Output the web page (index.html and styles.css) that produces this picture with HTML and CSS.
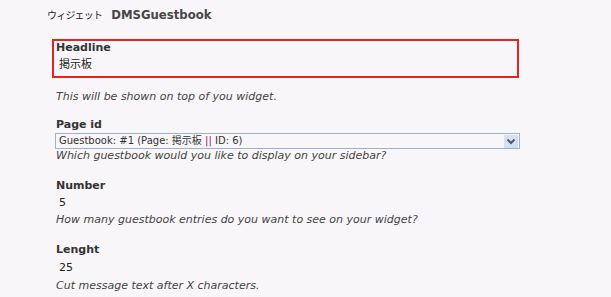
FILE: index.html
```html
<!DOCTYPE html>
<html>
<head>
<meta charset="utf-8">
<link rel="stylesheet" href="styles.css">
</head>
<body>
<div class="page">
  <h2 class="title"><span class="jp">ウィジェット</span><b>DMSGuestbook</b></h2>
  <div class="field highlight">
    <div class="label">Headline</div>
    <div class="value">掲示板</div>
  </div>
  <div class="desc first">This will be shown on top of you widget.</div>

  <div class="label l2">Page id</div>
  <div class="select">
    <span>Guestbook: #1 (Page: 掲示板 <span class="sep">||</span> ID: 6)</span>
    <span class="arrow"><svg width="14" height="13" viewBox="0 0 14 13"><path d="M1 12 H13 V1" fill="none" stroke="#c8d8ea" stroke-width="1"/><path d="M3.5 4.5 L7 8 L10.5 4.5" fill="none" stroke="#4a5a7a" stroke-width="2"/></svg></span>
  </div>
  <div class="desc">Which guestbook would you like to display on your sidebar?</div>

  <div class="label l3">Number</div>
  <div class="value v2">5</div>
  <div class="desc">How many guestbook entries do you want to see on your widget?</div>

  <div class="label l3">Lenght</div>
  <div class="value v2 v3">25</div>
  <div class="desc d3">Cut message text after X characters.</div>
</div>
</body>
</html>
```

FILE: styles.css
```css
html, body {
  margin: 0;
  padding: 0;
  background: #f8f6f8;
}
body {
  font-family: "DejaVu Sans", Verdana, "Noto Sans CJK JP", sans-serif;
  color: #333333;
  font-size: 11px;
}
.page {
  padding: 7px 0 0 47px;
  width: 470px;
}
.title {
  margin: 0;
  height: 16px;
  font-size: 11.7px;
  line-height: 16px;
  font-weight: normal;
  color: #333;
  display: flex;
  align-items: baseline;
}
.title .jp {
  font-family: "Noto Sans CJK JP", sans-serif;
  font-size: 10px;
  letter-spacing: -0.8px;
  margin-right: 9px;
  color: #222;
}
.title b {
  font-weight: bold;
  color: #464646;
}
.field.highlight {
  margin: 16px 0 0 5px;
  border: 2px solid #e52421;
  height: 35px;
  width: 461px;
  padding: 0 0 0 2px;
  box-sizing: content-box;
}
.label {
  font-weight: bold;
  font-size: 11px;
  line-height: 14px;
  color: #333;
}
.value {
  font-family: "Noto Sans CJK JP", sans-serif;
  font-size: 11px;
  line-height: 14px;
  padding-left: 3px;
  margin-top: 1px;
  color: #222;
}
.desc {
  font-style: italic;
  font-size: 11px;
  line-height: 14px;
  color: #444;
  margin-left: 9px;
}
.desc.first {
  margin-top: 12px;
}
.l2 {
  margin: 14px 0 0 9px;
}
.select {
  margin: 1px 0 0 8px;
  width: 460px;
  height: 14px;
  border: 1px solid #9db3cc;
  background: #f8f6f8;
  display: flex;
  align-items: center;
  justify-content: space-between;
  font-size: 10px;
  line-height: 14px;
  padding-left: 3px;
  box-sizing: content-box;
  color: #333;
}
.select .sep {
  color: #7a2a8a;
}
.arrow {
  display: flex;
  width: 14px;
  height: 13px;
  background: #d6e2f0;
  margin-right: 1px;
}
.l3 {
  margin: 16px 0 0 9px;
}
.v2 {
  font-family: "DejaVu Sans", Verdana, sans-serif;
  margin-left: 9px;
  padding-left: 3px;
  line-height: 20px;
  margin-top: 0;
}
.v3 {
  margin-top: 1px;
}
.d3 {
  margin-top: 1px;
}
```
